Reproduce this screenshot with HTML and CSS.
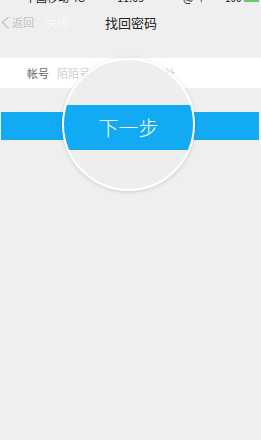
FILE: index.html
```html
<!DOCTYPE html>
<html lang="zh">
<head>
<meta charset="utf-8">
<title>找回密码</title>
<link rel="stylesheet" href="styles.css">
</head>
<body>
<div class="page">
  <div class="status">
    <div class="status-row">
      <span class="carrier">中国移动 4G</span>
      <span class="time">11:09</span>
      <span class="right"><span class="icons">@ ↑ ◦</span><span class="pct">100%</span><span class="battery"></span></span>
    </div>
  </div>
  <div class="nav">
    <div class="nav-left">
      <svg class="chev" width="9" height="13" viewBox="0 0 9 13"><path d="M7.5 1 L1.5 6.5 L7.5 12" fill="none" stroke="#c4c4c4" stroke-width="1.4"/></svg>
      <span class="back">返回</span>
      <span class="close">关闭</span>
    </div>
    <div class="title">找回密码</div>
  </div>
  <div class="field">
    <span class="label">帐号</span>
    <span class="placeholder">陌陌号/手机号/邮箱地址</span>
  </div>
  <div class="btn">下一步</div>
  <div class="lens">
    <div class="lens-band">下一步</div>
  </div>
</div>
</body>
</html>
```

FILE: styles.css
```css
* { box-sizing: border-box; }
html, body { margin: 0; padding: 0; }
body {
  background: #efefef;
  font-family: "Noto Sans CJK SC", "Noto Sans", sans-serif;
  width: 261px;
  height: 440px;
  overflow: hidden;
}
.page { position: relative; height: 440px; }
.status { height: 4px; overflow: hidden; }
.status-row {
  margin-top: -9px;
  height: 13px;
  display: flex;
  align-items: center;
  font-size: 11px;
  line-height: 13px;
  color: #222;
  padding: 0 2px 0 25px;
}
.carrier { width: 92px; }
.time { width: 60px; }
.right { display: flex; align-items: center; margin-left: auto; }
.icons { width: 42px; }
.pct { width: 18px; font-size: 10px; }
.battery { width: 15px; height: 8px; background: #6cc664; margin-left: 1px; }
.nav {
  height: 36px;
  display: flex;
  align-items: center;
  justify-content: center;
  position: relative;
}
.nav-left {
  position: absolute;
  left: 1px;
  top: 0;
  height: 36px;
  display: flex;
  align-items: center;
}
.chev { margin-right: 2px; }
.back { font-size: 11px; color: #c2c2c2; }
.close { font-size: 12px; color: #fafafa; margin-left: 11px; }
.title { font-size: 13px; color: #222; padding-left: 1px; }
.field {
  margin-top: 18px;
  height: 30px;
  background: #fff;
  display: flex;
  align-items: center;
  padding-left: 27px;
}
.label { font-size: 11px; color: #666; width: 30px; }
.placeholder { font-size: 11px; color: #cfcfcf; }
.btn {
  margin: 24px 2px 0 1px;
  height: 28px;
  background: #13aaf4;
  color: #fff;
  font-size: 14px;
  display: flex;
  align-items: center;
  justify-content: center;
}
.lens {
  position: absolute;
  left: 62px;
  top: 58px;
  width: 133px;
  height: 133px;
  border-radius: 50%;
  border: 2px solid #fff;
  background: #eeeeee;
  overflow: hidden;
  box-shadow: 0 1px 4px rgba(0, 0, 0, 0.14);
}
.lens-band {
  margin-top: 45px;
  height: 45px;
  background: #13aaf4;
  color: #fff;
  font-size: 20px;
  font-weight: 300;
  display: flex;
  align-items: center;
  justify-content: center;
  letter-spacing: 0;
}
```
